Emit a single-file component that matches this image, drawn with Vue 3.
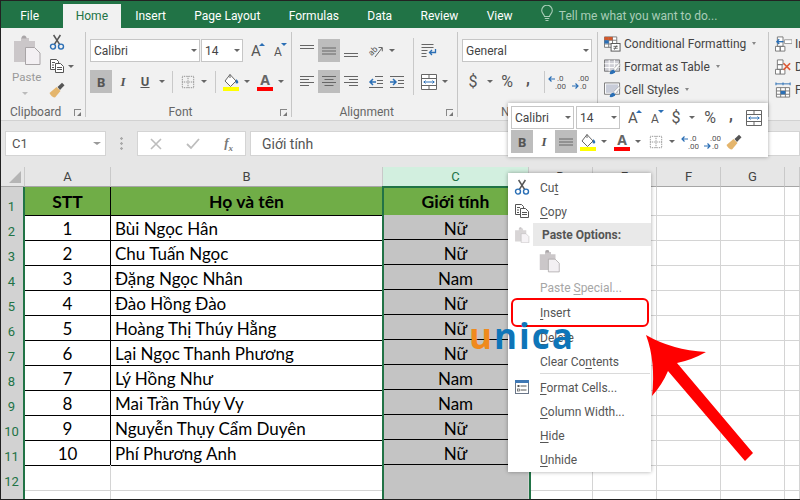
<script setup>
const tabs = ['File', 'Home', 'Insert', 'Page Layout', 'Formulas', 'Data', 'Review', 'View']

const people = [
  ['1', 'Bùi Ngọc Hân', 'Nữ'],
  ['2', 'Chu Tuấn Ngọc', 'Nữ'],
  ['3', 'Đặng Ngọc Nhân', 'Nam'],
  ['4', 'Đào Hồng Đào', 'Nữ'],
  ['5', 'Hoàng Thị Thúy Hằng', 'Nữ'],
  ['6', 'Lại Ngọc Thanh Phương', 'Nữ'],
  ['7', 'Lý Hồng Như', 'Nam'],
  ['8', 'Mai Trần Thúy Vy', 'Nam'],
  ['9', 'Nguyễn Thụy Cẩm Duyên', 'Nữ'],
  ['10', 'Phí Phương Anh', 'Nữ'],
]

const styleRows = [
  { icon: '#i-cond', label: 'Conditional Formatting' },
  { icon: '#i-table', label: 'Format as Table' },
  { icon: '#i-styles', label: 'Cell Styles' },
]

const cellRows = [
  { icon: '#i-cell-ins', label: 'Insert' },
  { icon: '#i-cell-del', label: 'Delete' },
  { icon: '#i-cell-fmt', label: 'Format' },
]

// pre / underlined letter / post
const lowerMenu = [
  ['', 'F', 'ormat Cells...', '#i-fmt'],
  ['', 'C', 'olumn Width...'],
  ['', 'H', 'ide'],
  ['', 'U', 'nhide'],
]
</script>

<template>
  <div class="frame">
    <!-- shared icons -->
    <svg class="defs" aria-hidden="true">
      <symbol id="i-cut" viewBox="0 0 16 16">
        <path d="M5.4 10.4 11.4 1M10.6 10.4 4.6 1" fill="none" stroke="#555" stroke-width="1.5" />
        <circle cx="4" cy="12.6" r="2.5" fill="none" stroke="#2b6fb5" stroke-width="1.4" />
        <circle cx="12" cy="12.6" r="2.5" fill="none" stroke="#2b6fb5" stroke-width="1.4" />
      </symbol>
      <symbol id="i-copy" viewBox="0 0 16 16">
        <path d="M1.5 1.5h6l2 2v8h-8z" fill="#fff" stroke="#555" />
        <path d="M6.5 5.5h5l3 3v6h-8z" fill="#fff" stroke="#555" />
        <path d="M3 4.5h3M3 7h2M3 9.5h2M8 9.5h5M8 11.5h5" stroke="#555" />
      </symbol>
      <symbol id="i-paste" viewBox="0 0 28 30">
        <path d="M1 6h7V3h8v3h6v21H1z" fill="#cbc7c9" />
        <path d="M11 0.5a2.5 2.5 0 0 1 2.5 3h-5a2.500 2.500 0 0 1 2.500-3z" fill="#a9a5a7" />
        <path d="M12.500 12.500h9l5.500 5.500v11.500h-14.500z" fill="#f3f0f3" stroke="#a8a4a6" />
      </symbol>
      <symbol id="i-brush" viewBox="0 0 16 16">
        <path d="M0.500 11 7.500 5l4 4-5.500 6.500C4 15.500 1.500 13.500 0.500 11z" fill="#e4b56c" />
        <path d="M8.500 5 13 0.800 15.500 3.300 11 8z" fill="#555" />
      </symbol>
      <symbol id="i-fill" viewBox="0 0 16 18">
        <path d="M7 1.500 13 8l-5.500 5.500L2 8z" fill="#fff" stroke="#666" />
        <path d="M7 1.500V5" stroke="#666" />
        <path d="M13.500 6c1 1.500 1.800 2.300 1.800 3.200a1.400 1.400 0 0 1-2.800 0z" fill="#2b6fb5" />
        <rect y="14" width="16" height="4" fill="#ff0" />
      </symbol>
      <symbol id="i-borders" viewBox="0 0 16 16">
        <path d="M1.500 1.500h13v13h-13zM8 1.500v13M1.500 8h13" fill="none" stroke="#777" stroke-dasharray="1 1" />
      </symbol>
      <symbol id="i-top" viewBox="0 0 16 16">
        <path d="M1 2.500h14M1 5.500h14" stroke="#666" />
      </symbol>
      <symbol id="i-mid" viewBox="0 0 16 16">
        <path d="M1 5h14M1 8h14M1 11h14" stroke="#666" />
      </symbol>
      <symbol id="i-bottom" viewBox="0 0 16 16">
        <path d="M1 10.500h14M1 13.500h14" stroke="#666" />
      </symbol>
      <symbol id="i-left" viewBox="0 0 16 16">
        <path d="M1 2.500h14M1 5.500h9M1 8.500h14M1 11.500h9" stroke="#666" />
      </symbol>
      <symbol id="i-center" viewBox="0 0 16 16">
        <path d="M1 2.500h14M3.500 5.500h9M1 8.500h14M3.500 11.500h9" stroke="#666" />
      </symbol>
      <symbol id="i-right" viewBox="0 0 16 16">
        <path d="M1 2.500h14M6 5.500h9M1 8.500h14M6 11.500h9" stroke="#666" />
      </symbol>
      <symbol id="i-outdent" viewBox="0 0 16 16">
        <path d="M7 2.500h8M9 6.500h6M9 9.500h6M1 13.500h14" stroke="#666" />
        <path d="M8 8H2M5 5 2 8l3 3" fill="none" stroke="#2b6fb5" stroke-width="1.500" />
      </symbol>
      <symbol id="i-indent" viewBox="0 0 16 16">
        <path d="M1 2.500h14M1 13.500h14M9 6.500h6M9 9.500h6" stroke="#666" />
        <path d="M1 8h6M4 5l3 3-3 3" fill="none" stroke="#2b6fb5" stroke-width="1.500" />
      </symbol>
      <symbol id="i-orient" viewBox="0 0 16 16">
        <text x="1" y="11" font-size="8.500" font-family="Roboto, sans-serif" fill="#555" transform="rotate(-45 5 9)">ab</text>
        <path d="M7 14 14 5M10.500 4.500h3.800v3.800" fill="none" stroke="#666" />
      </symbol>
      <symbol id="i-wrap" viewBox="0 0 16 16">
        <path d="M0.500 1.500h12M0.500 4.500h12M0.500 7.500h6M0.500 10.500h5M0.500 13.500h5" stroke="#666" />
        <path d="M14.500 6v3.500h-6M11 7 8.500 9.500 11 12" fill="none" stroke="#2b6fb5" stroke-width="1.300" />
      </symbol>
      <symbol id="i-merge" viewBox="0 0 16 16">
        <path d="M0.500 0.500h15v15H0.500zM0.500 4.500h15M0.500 11.500h15M8 0.500v4M8 11.500v4" fill="#fff" stroke="#666" />
        <path d="M2.500 8h11M4.500 6.500 3 8l1.500 1.500M11.500 6.500 13 8l-1.500 1.500" fill="none" stroke="#2b6fb5" />
      </symbol>
      <symbol id="i-inc" viewBox="0 0 18 16">
        <text x="9" y="7" font-size="8" font-family="Roboto, sans-serif" fill="#555">.0</text>
        <text x="7" y="15" font-size="8" font-family="Roboto, sans-serif" fill="#555">.00</text>
        <path d="M1 5h6M3.500 2.500 1 5l2.500 2.500" fill="none" stroke="#2b6fb5" stroke-width="1.200" />
      </symbol>
      <symbol id="i-dec" viewBox="0 0 18 16">
        <text x="7" y="7" font-size="8" font-family="Roboto, sans-serif" fill="#555">.00</text>
        <text x="9" y="15" font-size="8" font-family="Roboto, sans-serif" fill="#555">.0</text>
        <path d="M1 12h6M4.500 9.500 7 12l-2.500 2.500" fill="none" stroke="#2b6fb5" stroke-width="1.200" />
      </symbol>
      <symbol id="i-cond" viewBox="0 0 18 16">
        <path d="M0.500 0.500h13v11h-13zM5 0.500v11M9 0.500v11M0.500 4h13M0.500 8h13" fill="#fff" stroke="#777" />
        <rect x="0.500" y="0.500" width="4.500" height="3.500" fill="#d2572a" />
        <rect x="0.500" y="4" width="4.500" height="3.500" fill="#2b6fb5" />
        <rect x="5" y="0.500" width="4" height="3.500" fill="#d2572a" />
        <rect x="7.500" y="7.500" width="9.500" height="8" fill="#fff" stroke="#555" />
        <path d="M10 10.500h4.500M10 12.500h4.500M13.500 9.500l-2.500 4.500" stroke="#444" stroke-width="0.800" />
      </symbol>
      <symbol id="i-table" viewBox="0 0 18 16">
        <path d="M0.500 0.500h16v12h-16z" fill="#cfcfd6" stroke="#777" />
        <path d="M5.500 0.500v12M11 0.500v12M0.500 4.500h16M0.500 8.500h16" stroke="#fff" />
        <path d="M16 4 10 10l2 2 5-6z" fill="#fff" stroke="#888" stroke-width="0.500" />
        <path d="M6 15.500c0-2.500 2-4.500 4-4.500l2 1.500c0 2-3 3.500-6 3z" fill="#2b6fb5" />
      </symbol>
      <symbol id="i-styles" viewBox="0 0 18 16">
        <path d="M0.500 0.500h16v12h-16z" fill="#fff" stroke="#777" />
        <rect x="2" y="2" width="13" height="9" fill="#c8ccd8" />
        <path d="M16 4 10 10l2 2 5-6z" fill="#fff" stroke="#888" stroke-width="0.500" />
        <path d="M6 15.500c0-2.500 2-4.500 4-4.500l2 1.500c0 2-3 3.500-6 3z" fill="#2b6fb5" />
      </symbol>
      <symbol id="i-cell-ins" viewBox="0 0 18 16">
        <path d="M2.500 0.500h6v5h-6zM0.500 10.500h5v5h-5zM5.500 10.500h5v5h-5zM2.500 5.500h6v5h-6z" fill="#fff" stroke="#777" />
        <path d="M10 3.500h8v4h-8z" fill="#fff" stroke="#999" />
        <path d="M9 5.500H2M4.500 3 2 5.500 4.500 8" fill="none" stroke="#2b6fb5" stroke-width="1.400" />
      </symbol>
      <symbol id="i-cell-del" viewBox="0 0 18 16">
        <path d="M2.500 0.500h6v5h-6zM2.500 5.500h5v5h-5zM0.500 10.500h5v5h-5zM5.500 10.500h5v5h-5z" fill="#fff" stroke="#777" />
        <path d="M9 4l7 7M16 4l-7 7" stroke="#dd5a36" stroke-width="1.700" />
      </symbol>
      <symbol id="i-cell-fmt" viewBox="0 0 18 16">
        <path d="M1 1.500h15M1 0v3M16 0v3M8.500 0v3" fill="none" stroke="#2b6fb5" />
        <path d="M1.500 5.500h14v10h-14zM1.500 9h14M1.500 12.500h14M6 5.500v10M11 5.500v10" fill="#fff" stroke="#777" />
        <rect x="6" y="9" width="5" height="3.500" fill="#2b6fb5" />
      </symbol>
      <symbol id="i-fmt" viewBox="0 0 16 16">
        <rect x="1.500" y="1.500" width="13" height="13" fill="#fff" stroke="#6a7688" />
        <rect x="1" y="1" width="14" height="3" fill="#3f78b5" />
        <path d="M6.500 7h6M6.500 11h6" stroke="#555" />
        <rect x="3.500" y="6" width="2" height="2" fill="#555" />
        <rect x="3.500" y="10" width="2" height="2" fill="none" stroke="#555" stroke-width="0.700" />
      </symbol>
    </svg>

    <!-- tabs -->
    <div class="tabs">
      <div v-for="t in tabs" :key="t" class="tab" :class="{ active: t === 'Home', file: t === 'File' }">{{ t }}</div>
      <svg class="bulb" width="12" height="17" viewBox="0 0 12 17" fill="none" stroke="#a9cdb8" stroke-width="1.100">
        <path d="M3.500 11.500C3 9 .7 8.200 .7 5.500a5.300 5.300 0 0 1 10.600 0c0 2.700-2.300 3.500-2.800 6z" />
        <path d="M3.800 13.500h4.400M4.500 15.500h3" />
      </svg>
      <div class="tell">Tell me what you want to do...</div>
    </div>

    <!-- ribbon -->
    <div class="ribbon">
      <section class="group g-clip">
        <div class="body clip-body">
          <div class="paste-col">
            <svg class="paste-ico"><use href="#i-paste" /></svg>
            <span class="paste-label">Paste</span>
            <span class="caret faint"></span>
          </div>
          <div class="clip-tools">
            <svg class="ico"><use href="#i-cut" /></svg>
            <div class="row-tight">
              <svg class="ico"><use href="#i-copy" /></svg>
              <span class="caret"></span>
            </div>
            <svg class="ico"><use href="#i-brush" /></svg>
          </div>
        </div>
        <footer class="foot">
          <span></span><span>Clipboard</span><i class="launcher"></i>
        </footer>
      </section>

      <section class="group g-font">
        <div class="body stack">
          <div class="row">
            <div class="combo w110">Calibri<span class="caret"></span></div>
            <div class="combo w42 ml1">14<span class="caret"></span></div>
            <div class="btn w22 ml2 big-a">A<i class="tri up"></i></div>
            <div class="btn w22 small-a">A<i class="tri down"></i></div>
          </div>
          <div class="row">
            <div class="btn w22 on bold">B</div>
            <div class="btn w22 ital">I</div>
            <div class="btn w22 under">U</div>
            <span class="caret"></span>
            <i class="vsep ml5"></i>
            <div class="btn w20 ml5"><svg class="ico14"><use href="#i-borders" /></svg></div>
            <span class="caret"></span>
            <i class="vsep ml6"></i>
            <div class="btn w20 ml5"><svg class="ico-fill"><use href="#i-fill" /></svg></div>
            <span class="caret"></span>
            <div class="btn w20 ml3 color-a">A<i></i></div>
            <span class="caret"></span>
          </div>
        </div>
        <footer class="foot">
          <span></span><span>Font</span><i class="launcher"></i>
        </footer>
      </section>

      <section class="group g-align">
        <div class="body align-body">
          <div class="stack align-left">
            <div class="row">
              <div class="btn w22"><svg class="ico"><use href="#i-top" /></svg></div>
              <div class="btn w22 on"><svg class="ico"><use href="#i-mid" /></svg></div>
              <div class="btn w22"><svg class="ico"><use href="#i-bottom" /></svg></div>
              <div class="btn w20 ml4"><svg class="ico"><use href="#i-orient" /></svg></div>
              <span class="caret"></span>
            </div>
            <div class="row">
              <div class="btn w22"><svg class="ico"><use href="#i-left" /></svg></div>
              <div class="btn w22 on"><svg class="ico"><use href="#i-center" /></svg></div>
              <div class="btn w22"><svg class="ico"><use href="#i-right" /></svg></div>
              <div class="btn w20 ml4"><svg class="ico"><use href="#i-outdent" /></svg></div>
              <div class="btn w22"><svg class="ico"><use href="#i-indent" /></svg></div>
            </div>
          </div>
          <i class="vsep tall"></i>
          <div class="stack align-right">
            <div class="row">
              <div class="btn w20"><svg class="ico"><use href="#i-wrap" /></svg></div>
            </div>
            <div class="row">
              <div class="btn w20"><svg class="ico"><use href="#i-merge" /></svg></div>
              <span class="caret"></span>
            </div>
          </div>
        </div>
        <footer class="foot">
          <span></span><span>Alignment</span><i class="launcher"></i>
        </footer>
      </section>

      <section class="group g-number">
        <div class="body stack">
          <div class="row">
            <div class="combo w130">General<span class="caret"></span></div>
          </div>
          <div class="row">
            <div class="btn w22 sym">$</div>
            <span class="caret"></span>
            <div class="btn w22 ml1 sym">%</div>
            <div class="btn w20 sym comma">,</div>
            <i class="vsep ml6"></i>
            <div class="btn w22 ml1"><svg class="ico-dec"><use href="#i-inc" /></svg></div>
            <div class="btn w22 ml1"><svg class="ico-dec"><use href="#i-dec" /></svg></div>
          </div>
        </div>
        <footer class="foot">
          <span></span><span>Number</span><span></span>
        </footer>
      </section>

      <section class="group g-styles">
        <div v-for="s in styleRows" :key="s.label" class="list-row">
          <svg class="ico-list"><use :href="s.icon" /></svg>
          <span>{{ s.label }}</span>
          <span class="caret small"></span>
        </div>
      </section>

      <section class="group g-cells">
        <div v-for="c in cellRows" :key="c.label" class="list-row">
          <svg class="ico-list"><use :href="c.icon" /></svg>
          <span>{{ c.label }}</span>
        </div>
      </section>
    </div>

    <!-- formula bar -->
    <div class="formula">
      <div class="namebox">C1<span class="caret dark"></span></div>
      <div class="grip"></div>
      <div class="fx-box">
        <svg width="12" height="12" viewBox="0 0 12 12" fill="none" stroke="#bdbdbd" stroke-width="1.600">
          <path d="M1 1l10 10M11 1 1 11" />
        </svg>
        <svg width="14" height="12" viewBox="0 0 14 12" fill="none" stroke="#bdbdbd" stroke-width="1.800">
          <path d="M1 6l4 4 8-9" />
        </svg>
        <span class="fx">f<sub>x</sub></span>
      </div>
      <div class="input">Giới tính</div>
    </div>

    <!-- sheet -->
    <div class="sheet">
      <div class="line heads">
        <div class="corner"><i></i></div>
        <div class="col">A</div>
        <div class="col">B</div>
        <div class="col sel">C</div>
        <div class="col">D</div>
        <div class="col">E</div>
        <div class="col">F</div>
        <div class="col">G</div>
        <div class="col"></div>
      </div>

      <div class="line first">
        <div class="rh">1</div>
        <div class="c title">STT</div>
        <div class="c title">Họ và tên</div>
        <div class="c title">Giới tính</div>
        <div class="g" v-for="n in 5" :key="n"></div>
      </div>

      <div v-for="(p, i) in people" :key="p[0]" class="line">
        <div class="rh">{{ i + 2 }}</div>
        <div class="c mid">{{ p[0] }}</div>
        <div class="c name">{{ p[1] }}</div>
        <div class="c mid gray ruled">{{ p[2] }}</div>
        <div class="g" v-for="n in 5" :key="n"></div>
      </div>

      <div class="line">
        <div class="rh">12</div>
        <div class="g"></div>
        <div class="g"></div>
        <div class="g gray"></div>
        <div class="g" v-for="n in 5" :key="n"></div>
      </div>
      <div class="line">
        <div class="rh">13</div>
        <div class="g"></div>
        <div class="g"></div>
        <div class="g gray"></div>
        <div class="g" v-for="n in 5" :key="n"></div>
      </div>
    </div>

    <!-- selected column outline -->
    <div class="selection"></div>

    <!-- mini toolbar -->
    <div class="mini">
      <div class="row">
        <div class="combo mini-name">Calibri<span class="caret"></span></div>
        <div class="combo mini-size">14<span class="caret"></span></div>
        <div class="btn w22 ml2 big-a">A<i class="tri up"></i></div>
        <div class="btn w22 small-a">A<i class="tri down"></i></div>
        <div class="btn w20 sym">$</div>
        <span class="caret"></span>
        <div class="btn w22 ml2 sym">%</div>
        <div class="btn w20 sym comma">,</div>
        <div class="btn w20 ml3"><svg class="ico"><use href="#i-merge" /></svg></div>
      </div>
      <div class="row">
        <div class="btn w22 on bold">B</div>
        <div class="btn w22 ital">I</div>
        <div class="btn w22 on"><svg class="ico"><use href="#i-mid" /></svg></div>
        <div class="btn w20 ml1"><svg class="ico-fill"><use href="#i-fill" /></svg></div>
        <span class="caret"></span>
        <div class="btn w20 ml3 color-a">A<i></i></div>
        <span class="caret"></span>
        <div class="btn w20 ml3"><svg class="ico14"><use href="#i-borders" /></svg></div>
        <span class="caret"></span>
        <div class="btn w22 ml2"><svg class="ico-dec"><use href="#i-inc" /></svg></div>
        <div class="btn w22"><svg class="ico-dec"><use href="#i-dec" /></svg></div>
        <div class="btn w20 ml1"><svg class="ico"><use href="#i-brush" /></svg></div>
      </div>
    </div>

    <!-- context menu -->
    <div class="menu">
      <div class="item">
        <svg class="ico"><use href="#i-cut" /></svg>
        <span class="txt">Cu<u>t</u></span>
      </div>
      <div class="item">
        <svg class="ico"><use href="#i-copy" /></svg>
        <span class="txt"><u>C</u>opy</span>
      </div>
      <div class="item head">
        <svg class="ico ghost"><use href="#i-paste" /></svg>
        <span class="head-txt">Paste Options:</span>
      </div>
      <div class="paste-row">
        <svg class="paste-menu"><use href="#i-paste" /></svg>
      </div>
      <div class="item off">
        <span class="txt">Paste <u>S</u>pecial...</span>
      </div>
      <div class="item spaced">
        <span class="txt"><u>I</u>nsert</span>
      </div>
      <div class="item">
        <span class="txt"><u>D</u>elete</span>
      </div>
      <div class="item">
        <span class="txt">Clear Co<u>n</u>tents</span>
      </div>
      <div class="menu-sep"></div>
      <div v-for="m in lowerMenu" :key="m[2]" class="item">
        <svg v-if="m[3]" class="ico"><use :href="m[3]" /></svg>
        <span class="txt"><u>{{ m[1] }}</u>{{ m[2] }}</span>
      </div>
    </div>

    <div class="callout"></div>

    <div class="logo"><span class="logo-u">u</span>nica</div>

    <svg class="arrow" width="800" height="500" viewBox="0 0 800 500" aria-hidden="true">
      <path d="M646 335Q672 350 706 352Q692 360 677 363L753 453L745 461L668 371Q662 385 652 396Q656 362 646 335Z" fill="#ff0000" />
    </svg>
  </div>
</template>

<style scoped>
.frame {
  position: relative;
  width: 800px;
  height: 500px;
  overflow: hidden;
  background: #fff;
  font-family: Roboto, "Noto Sans", sans-serif;
  font-size: 12px;
  color: #444;
}
.frame::after {
  content: '';
  position: absolute;
  inset: 0;
  border: 1px solid #222;
  border-right: none;
  pointer-events: none;
  z-index: 9;
}
.defs {
  position: absolute;
  width: 0;
  height: 0;
}

/* tabs */
.tabs {
  height: 28px;
  background: #217346;
  display: flex;
  align-items: flex-end;
  padding-left: 6px;
  color: #fff;
  font-size: 12px;
}
.tab {
  height: 24px;
  line-height: 24px;
  padding: 0 14.2px;
}
.tab.file {
  margin-right: 9.5px;
}
.tab.active {
  background: #f1f1f1;
  color: #217346;
  padding: 0 13px;
}
.bulb {
  margin: 0 6px 6px 14px;
}
.tell {
  height: 24px;
  line-height: 24px;
  color: #a9cdb8;
}

/* ribbon */
.ribbon {
  height: 92px;
  box-sizing: content-box;
  background: #f1f1f1;
  border-bottom: 1px solid #d2d2d2;
  display: flex;
  align-items: flex-start;
}
.group {
  height: 85px;
  margin-top: 4px;
  border-right: 1px solid #c6c6c6;
  display: flex;
  flex-direction: column;
  flex-shrink: 0;
}
.body {
  height: 72px;
  flex-shrink: 0;
}
.stack {
  display: flex;
  flex-direction: column;
  gap: 8px;
  padding-top: 7px;
  box-sizing: border-box;
}
.row {
  display: flex;
  align-items: center;
  height: 23px;
}
.foot {
  height: 16px;
  margin-bottom: -3px;
  display: grid;
  grid-template-columns: 1fr auto 1fr;
  align-items: center;
  font-size: 12px;
  color: #666;
  padding-right: 4px;
}
.g-clip .foot { grid-template-columns: 9px auto 1fr; }
.g-font .foot { grid-template-columns: 79fr auto 95fr; }
.g-align .foot { grid-template-columns: 44fr auto 60fr; }
.g-number .foot { grid-template-columns: 38fr auto 48fr; }
.launcher {
  justify-self: end;
  width: 6px;
  height: 6px;
  border-left: 1px solid #888;
  border-bottom: 1px solid #888;
  transform: scaleY(-1);
  position: relative;
}
.launcher::after {
  content: '';
  position: absolute;
  right: 0;
  top: 0;
  border: 2px solid transparent;
  border-top-color: #777;
  border-right-color: #777;
}

.g-clip { width: 84px; margin-left: 1px; }
.g-font { width: 206px; padding-left: 4px; box-sizing: border-box; }
.g-align { width: 166px; padding-left: 4px; box-sizing: border-box; }
.g-number { width: 140px; padding-left: 4px; box-sizing: border-box; }
.g-styles { width: 170px; }
.g-cells { flex: 1; border-right: none; }

.clip-body {
  display: flex;
}
.paste-col {
  width: 48px;
  padding: 3px 0 0 11px;
  box-sizing: border-box;
  display: flex;
  flex-direction: column;
  align-items: flex-start;
}
.paste-ico {
  width: 28px;
  height: 30px;
  margin-left: 1px;
}
.paste-label {
  color: #999;
  font-size: 11.5px;
  line-height: 16px;
  margin-top: 4px;
}
.caret.faint {
  margin-left: 7px;
  margin-top: 2px;
  height: 12px;
}
.clip-tools {
  display: flex;
  flex-direction: column;
  gap: 8px;
  padding-top: 2px;
}
.row-tight {
  display: flex;
  align-items: center;
  height: 16px;
}

/* generic controls */
.btn {
  height: 23px;
  display: flex;
  align-items: center;
  justify-content: center;
  flex-shrink: 0;
  position: relative;
}
.btn.on { background: #bdbdbd; }
.w22 { width: 22px; }
.w20 { width: 20px; }
.ml1 { margin-left: 1px; }
.ml2 { margin-left: 2px; }
.ml3 { margin-left: 3px; }
.ml4 { margin-left: 4px; }
.ml5 { margin-left: 5px; }
.ml6 { margin-left: 6px; }
.vsep {
  width: 1px;
  height: 22px;
  background: #c9c9c9;
  flex-shrink: 0;
}
.vsep.tall {
  height: 57px;
  margin-top: 6px;
}
.ico { width: 16px; height: 16px; flex-shrink: 0; }
.ico14 { width: 14px; height: 14px; }
.ico-fill { width: 16px; height: 18px; }
.ico-dec { width: 18px; height: 16px; }
.ico-list { width: 17px; height: 16px; flex-shrink: 0; }

.caret {
  width: 11px;
  height: 23px;
  display: inline-flex;
  align-items: center;
  justify-content: center;
  flex-shrink: 0;
}
.caret::after {
  content: '';
  border-left: 3px solid transparent;
  border-right: 3px solid transparent;
  border-top: 3px solid #666;
}
.caret.faint::after { border-top-color: #bbb; }
.caret.small { width: 8px; }
.caret.small::after {
  border-left-width: 2.500px;
  border-right-width: 2.500px;
  border-top-color: #888;
}

.combo {
  height: 23px;
  box-sizing: border-box;
  background: #fff;
  border: 1px solid #c6c6c6;
  display: flex;
  align-items: center;
  justify-content: space-between;
  padding-left: 3px;
  font-size: 12px;
  color: #444;
  flex-shrink: 0;
}
.w110 { width: 110px; }
.w42 { width: 42px; }
.w130 { width: 130px; }
.mini-name { width: 63px; }
.mini-size { width: 44px; margin-left: 2px; }

.bold { font: 700 13px "Noto Sans", sans-serif; color: #555; }
.ital { font: italic 13px "Liberation Serif", serif; color: #555; font-weight: 700; }
.under { font: 700 12px "Noto Sans", sans-serif; color: #555; text-decoration: underline; }
.big-a { font-size: 15px; color: #555; }
.small-a { font-size: 12px; color: #555; padding-top: 2px; box-sizing: border-box; }
.tri {
  position: absolute;
  right: 2px;
  top: 4px;
  border-left: 3px solid transparent;
  border-right: 3px solid transparent;
}
.tri.up { border-bottom: 3px solid #2b6fb5; }
.tri.down { border-top: 3px solid #2b6fb5; }
.color-a {
  font: 700 14px "Noto Sans", sans-serif;
  color: #666;
  flex-direction: column;
  line-height: 14px;
}
.color-a i {
  width: 16px;
  height: 4px;
  background: #f00;
}
.sym {
  font-size: 16px;
  color: #555;
}
.comma {
  font-weight: 700;
  padding-bottom: 6px;
  box-sizing: border-box;
}

.align-body {
  display: flex;
}
.align-left { width: 117px; }
.align-right { padding-left: 5px; }

.list-row {
  height: 23px;
  display: flex;
  align-items: center;
  gap: 3px;
  padding-left: 6px;
  font-size: 12px;
  color: #444;
  white-space: nowrap;
}
.list-row .caret { margin-left: 1px; }

/* formula bar */
.formula {
  height: 46px;
  box-sizing: border-box;
  background: #e6e6e6;
  padding: 10px 0 11px 5px;
  display: flex;
  align-items: stretch;
}
.namebox, .fx-box, .input {
  background: #fff;
  border: 1px solid #d4d4d4;
  box-sizing: border-box;
  display: flex;
  align-items: center;
}
.namebox {
  width: 101px;
  padding-left: 6px;
  justify-content: space-between;
  font-size: 13px;
  color: #555;
}
.caret.dark::after {
  border-left-width: 4px;
  border-right-width: 4px;
  border-top-color: #999;
}
.caret.dark { margin-right: 3px; }
.grip {
  width: 31px;
  background: radial-gradient(circle, #aaa 1px, transparent 1.500px) center / 2px 5px repeat-y;
  background-size: 3px 5px;
  margin: 5px 0;
}
.fx-box {
  width: 109px;
  padding: 0 12px;
  justify-content: space-between;
}
.fx {
  font: italic 700 13px "Liberation Serif", serif;
  color: #777;
}
.fx sub { font-size: 9px; }
.input {
  flex: 1;
  margin-left: 4px;
  padding-left: 11px;
  font-size: 14px;
  color: #555;
}

/* sheet */
.line {
  display: grid;
  grid-template-columns: 25px 86px 272px 146px 64px 64px 64px 64px 15px;
  height: 25px;
  box-sizing: border-box;
}
.heads { height: 20px; }
.first { height: 28px; }
.corner, .col {
  background: #e6e6e6;
  border-right: 1px solid #c9c9c9;
  border-bottom: 1px solid #a6a6a6;
  box-sizing: border-box;
  text-align: center;
  line-height: 19px;
  font-size: 13px;
  color: #444;
}
.corner {
  position: relative;
}
.corner i {
  position: absolute;
  right: 3px;
  bottom: 3px;
  border-left: 12px solid transparent;
  border-bottom: 12px solid #b5b5b5;
}
.col.sel {
  background: #d2efdf;
  color: #217346;
}
.rh {
  background: #d2d2d2;
  border-right: 2px solid #217346;
  border-bottom: 1px solid #b5b5b5;
  box-sizing: border-box;
  text-align: center;
  color: #217346;
  font-size: 13px;
  padding-top: 8px;
  line-height: 17px;
}
.first .rh { padding-top: 11px; }
.c {
  border-right: 1px solid #000;
  border-bottom: 1px solid #000;
  box-sizing: border-box;
  font-family: "Lato", "Open Sans", sans-serif;
  font-size: 17px;
  padding-top: 4px;
  line-height: 20px;
  color: #000;
  white-space: nowrap;
  overflow: hidden;
}
.title {
  background: #70ad47;
  font-weight: 700;
  font-size: 17.5px;
  text-align: center;
  padding-top: 3px;
  line-height: 24px;
}
.mid { text-align: center; }
.name { padding-left: 4px; }
.gray { background: #c4c4c4; }
.ruled { box-shadow: inset 0 -1px 0 #000; }
.g {
  border-right: 1px solid #d4d4d4;
  border-bottom: 1px solid #d4d4d4;
  box-sizing: border-box;
}

.selection {
  position: absolute;
  left: 382px;
  top: 186px;
  width: 149px;
  height: 330px;
  box-sizing: border-box;
  border: 2px solid #217346;
  pointer-events: none;
}

/* mini toolbar */
.mini {
  position: absolute;
  left: 508px;
  top: 103px;
  width: 260px;
  height: 54px;
  box-sizing: border-box;
  background: #fff;
  padding: 3px 3px 0;
  box-shadow: 0 0 4px rgba(0, 0, 0, .35);
  display: flex;
  flex-direction: column;
  gap: 1px;
}

/* context menu */
.menu {
  position: absolute;
  left: 508px;
  top: 173px;
  width: 143px;
  height: 299px;
  box-sizing: border-box;
  background: #fff;
  padding-top: 2px;
  box-shadow: 0 0 4px rgba(0, 0, 0, .35);
  font-size: 12px;
  color: #555;
}
.item {
  height: 24px;
  display: flex;
  align-items: center;
  padding-left: 6px;
  position: relative;
}
.txt {
  position: absolute;
  left: 32px;
  margin-top: 1px;
}
.item u { text-underline-offset: 2px; }
.head { height: 23px; }
.head-txt {
  margin-left: 3px;
  padding-left: 9px;
  background: #e9e9e9;
  align-self: stretch;
  line-height: 24px;
  flex: 1;
  font-weight: 700;
}
.ghost { opacity: .75; }
.paste-row {
  height: 29px;
  padding: 3px 0 0 31px;
  box-sizing: border-box;
}
.paste-menu { width: 21px; height: 24px; }
.off { color: #a6a6a6; }
.spaced { margin-top: 1px; margin-bottom: 1px; }
.menu-sep {
  height: 1px;
  margin: 0 1px 1px 32px;
  background: #dadada;
}

.callout {
  position: absolute;
  left: 511px;
  top: 298px;
  width: 138px;
  height: 29px;
  box-sizing: border-box;
  border: 2px solid #f00;
  border-radius: 6px;
}
.logo {
  position: absolute;
  left: 469px;
  top: 314px;
  font-family: "Open Sans", sans-serif;
  font-weight: 700;
  font-size: 35px;
  line-height: 44px;
  letter-spacing: 2px;
  color: #0e75b8;
}
.logo-u { color: #f08a1d; }
.arrow {
  position: absolute;
  left: 0;
  top: 0;
  pointer-events: none;
}
</style>

<style>
html, body {
  margin: 0;
  overflow: hidden;
  background: #fff;
}
</style>
